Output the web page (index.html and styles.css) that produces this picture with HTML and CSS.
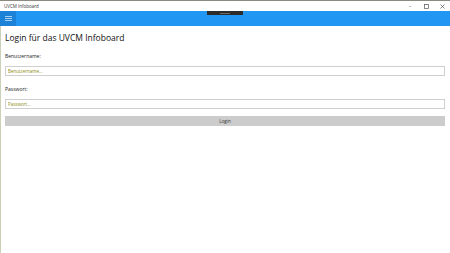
FILE: index.html
```html
<!DOCTYPE html>
<html lang="de">
<head>
  <meta charset="UTF-8" />
  <meta name="viewport" content="width=device-width, initial-scale=1.0" />
  <title>UVCM Infoboard</title>
  <link rel="stylesheet" href="styles.css">
</head>
<body>
  <div class="titlebar">
    <span class="app-title">UVCM Infoboard</span>
    <div class="window-controls">
      <span class="ctl">&#8211;</span>
      <span class="ctl">
        <svg width="5" height="5" viewBox="0 0 5 5"><rect x="0.5" y="0.5" width="4" height="4" fill="none" stroke="#555" stroke-width="0.7"/></svg>
      </span>
      <span class="ctl">
        <svg width="5" height="5" viewBox="0 0 5 5"><path d="M0.5 0.5 L4.5 4.5 M4.5 0.5 L0.5 4.5" stroke="#555" stroke-width="0.7"/></svg>
      </span>
    </div>
  </div>

  <div class="appbar">
    <button class="menu-btn">
      <svg width="7" height="5" viewBox="0 0 7 5"><path d="M0 0.5 H7 M0 2.5 H7 M0 4.5 H7" stroke="#cfe6fb" stroke-width="0.8"/></svg>
    </button>
    <div class="drag-handle"><span></span></div>
  </div>

  <main class="content">
    <h1 class="heading">Login für das UVCM Infoboard</h1>

    <label class="field-label" for="user">Benutzername:</label>
    <input class="field" id="user" type="text" placeholder="Benutzername...">

    <label class="field-label" for="pass">Passwort:</label>
    <input class="field pw" id="pass" type="text" placeholder="Passwort...">

    <button class="login-btn">Login</button>
  </main>
</body>
</html>
```

FILE: styles.css
```css
html, body {
  margin: 0;
  padding: 0;
  height: 100%;
}

body {
  font-family: "Open Sans", "Liberation Sans", sans-serif;
  background: #fff;
  color: #111;
  overflow: hidden;
}

.titlebar {
  height: 11px;
  display: flex;
  align-items: center;
  justify-content: space-between;
  border-top: 1px solid #8a8a80;
  box-sizing: border-box;
  background: #fff;
}

.app-title {
  font-size: 4.5px;
  color: #333;
  padding-left: 4px;
}

.window-controls {
  display: flex;
}

.ctl {
  width: 16px;
  display: flex;
  justify-content: center;
  align-items: center;
  font-size: 5px;
  color: #555;
}

.appbar {
  height: 15px;
  background: #2196f3;
  display: flex;
  position: relative;
}

.menu-btn {
  width: 16px;
  height: 15px;
  border: none;
  padding: 0;
  background: #1b82d8;
  display: flex;
  align-items: center;
  justify-content: center;
}

.drag-handle {
  position: absolute;
  left: 207px;
  top: 0;
  width: 36px;
  height: 4px;
  background: #2b2b2b;
  display: flex;
  align-items: center;
  justify-content: center;
}

.drag-handle span {
  width: 10px;
  height: 1px;
  background: #6a6a6a;
}

.content {
  height: calc(100% - 26px);
  border-left: 1px solid #c9d2b8;
  padding: 6px 5px 0 4px;
  display: flex;
  flex-direction: column;
}

.heading {
  font-size: 8.5px;
  font-weight: 400;
  margin: 0 0 10px 0;
  color: #111;
}

.field-label {
  font-size: 5px;
  color: #222;
  margin-bottom: 7px;
}

.field {
  height: 10px;
  box-sizing: border-box;
  border: 1px solid #cfcfcf;
  padding: 0 2px;
  font-family: inherit;
  font-size: 4.5px;
  margin: 0 0 10px 0;
  outline: none;
}

.field::placeholder {
  color: #8a8a10;
}

.login-btn {
  height: 10px;
  margin-top: -3px;
  border: none;
  background: #cccccc;
  font-family: inherit;
  font-size: 4.5px;
  color: #333;
  padding: 0;
}
```
